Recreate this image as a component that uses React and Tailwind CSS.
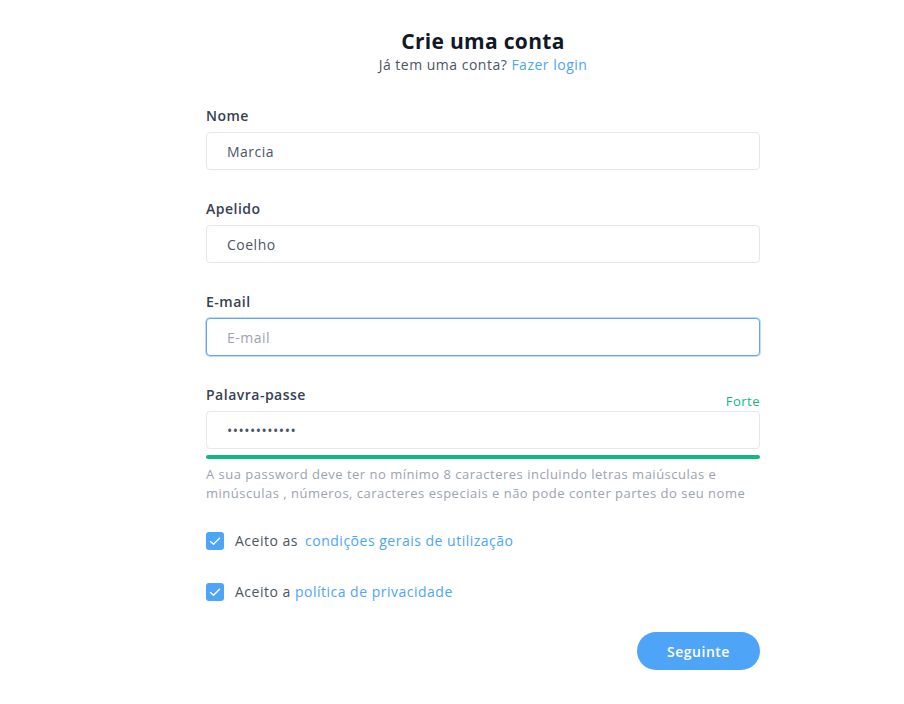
import React from 'react';

function Field({ label, value, placeholder, focused, type = 'text', extra }) {
  return (
    <div>
      <div className="flex items-end justify-between">
        <label className="text-[14px] font-semibold text-[#374151] leading-[20px]">{label}</label>
        {extra}
      </div>
      <input
        type={type}
        defaultValue={value}
        placeholder={placeholder}
        readOnly
        className={`mt-[6px] block w-full h-[38px] rounded-[4px] border bg-white px-[20px] text-[14px] tracking-[0.5px] text-[#4b5563] placeholder:text-[#9ca3af] outline-none ${
          focused ? 'border-[#60a5fa] shadow-[0_0_0_1px_#bfdbfe]' : 'border-[#e5e7eb]'
        }`}
      />
    </div>
  );
}

function Check({ children }) {
  return (
    <label className="flex items-center gap-[11px] text-[14px] leading-[20px] text-[#4b5563]">
      <span className="flex h-[18px] w-[18px] items-center justify-center rounded-[3px] bg-[#4ea5f8]">
        <svg width="14" height="14" viewBox="0 0 14 14" fill="none">
          <path d="M2.5 7.4l3 2.8L11.5 4.2" stroke="white" strokeWidth="1.4" strokeLinecap="round" strokeLinejoin="round" />
        </svg>
      </span>
      <span>{children}</span>
    </label>
  );
}

export default function App() {
  return (
    <div className="min-h-[704px] bg-white font-['Open_Sans',sans-serif] tracking-[0.5px]">
      <div className="ml-[206px] w-[554px] pt-[28px]">
        <div className="text-center">
          <h1 className="text-[21px] font-bold leading-[26px] tracking-[0.3px] text-[#111827]">Crie uma conta</h1>
          <p className="mt-[1px] text-[14px] leading-[20px] text-[#4b5563]">
            Já tem uma conta? <a className="text-[#4ea5f8]">Fazer login</a>
          </p>
        </div>

        <div className="mt-[31px] flex flex-col gap-[29px]">
          <Field label="Nome" value="Marcia" />
          <Field label="Apelido" value="Coelho" />
          <Field label="E-mail" placeholder="E-mail" focused />
          <div>
            <Field
              label="Palavra-passe"
              value="••••••••••••"
              extra={<span className="text-[13px] leading-[16px] text-[#10b981] translate-y-[4px]">Forte</span>}
            />
            <div className="mt-[6px] h-[4px] rounded-full bg-[#10b981]" />
            <p className="mt-[6px] text-[13px] leading-[19px] text-[#9ca3af]">
              A sua password deve ter no mínimo 8 caracteres incluindo letras maiúsculas e
              <br />
              minúsculas , números, caracteres especiais e não pode conter partes do seu nome
            </p>
          </div>
        </div>

        <div className="mt-[28px] flex flex-col gap-[31px]">
          <Check>
            Aceito as <span className="ml-[3px] text-[#4ea5f8]">condições gerais de utilização</span>
          </Check>
          <Check>
            Aceito a <span className="text-[#4ea5f8]">política de privacidade</span>
          </Check>
        </div>

        <div className="mt-[30px] flex justify-end">
          <button className="h-[38px] w-[123px] rounded-full bg-[#4ea5f8] text-[14px] font-semibold text-white">
            Seguinte
          </button>
        </div>
      </div>
    </div>
  );
}
